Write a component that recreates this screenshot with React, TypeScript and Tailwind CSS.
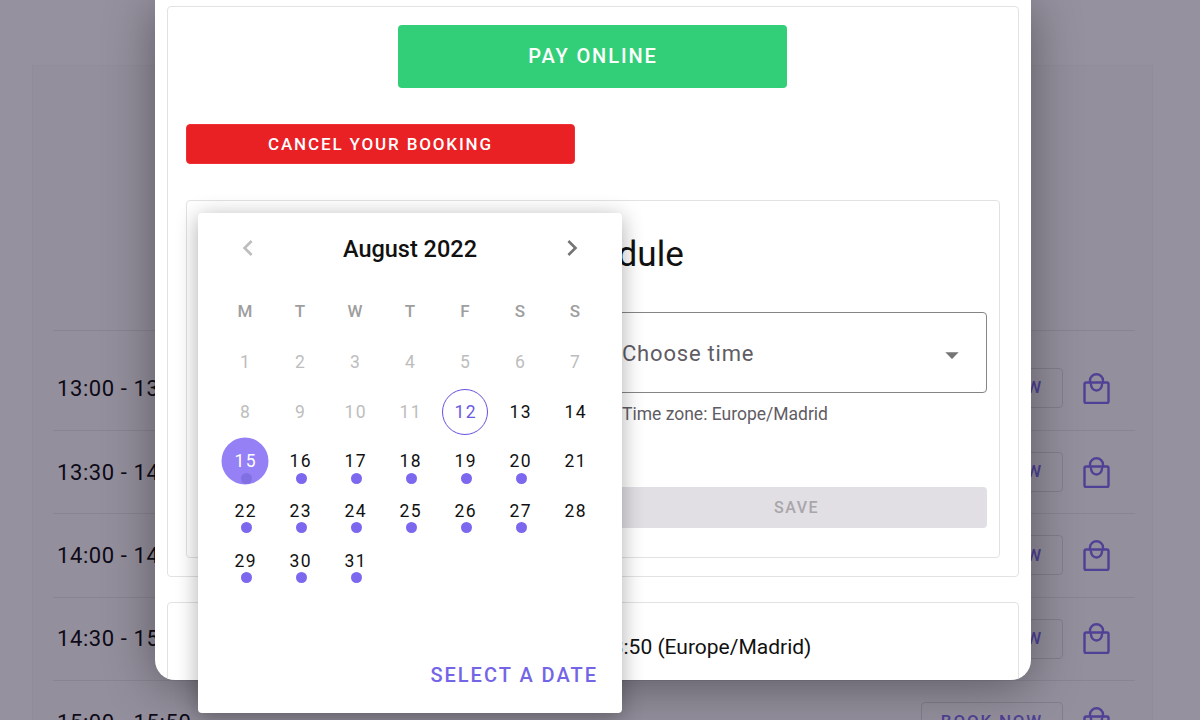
import React from 'react';

const font = { fontFamily: 'Roboto, sans-serif' };

const slots = ['13:00 - 13:50', '13:30 - 14:20', '14:00 - 14:50', '14:30 - 15:20', '15:00 - 15:50'];
const weekdays = ['M', 'T', 'W', 'T', 'F', 'S', 'S'];
const withDot = [15, 16, 17, 18, 19, 20, 22, 23, 24, 25, 26, 27, 29, 30, 31];

const BagIcon = () => (
  <svg width="27" height="31" viewBox="0 0 27 31" fill="none" stroke="#7b68ee" strokeWidth="2.4" strokeLinejoin="round" strokeLinecap="round">
    <path d="M3 9.5h21a1.5 1.5 0 0 1 1.5 1.5v17.5a1.5 1.5 0 0 1-1.5 1.5H3a1.5 1.5 0 0 1-1.5-1.5V11A1.5 1.5 0 0 1 3 9.5z" />
    <path d="M7 9.5V7.5a6.5 6.2 0 0 1 13 0v2" />
    <path d="M8 11.5a5.5 6 0 0 0 11 0" />
  </svg>
);

function SlotRow({ time, first }: { time: string; first?: boolean }) {
  return (
    <div className={`flex items-center justify-between border-t border-[#e6e6e6] pl-1 pr-[25px] ${first ? 'h-[100px] pt-[15px]' : 'h-[83.33px]'}`}>
      <span className="text-[22px] tracking-[0.6px] text-black">{time}</span>
      <div className="flex items-center gap-5">
        <button className="flex h-10 w-[142px] items-center justify-center rounded border border-[#dcdcdc] text-[17px] font-medium tracking-[1.8px] text-[#7b68ee]">
          BOOK NOW
        </button>
        <BagIcon />
      </div>
    </div>
  );
}

function Calendar() {
  const days = Array.from({ length: 31 }, (_, i) => i + 1);
  return (
    <div className="absolute left-[198px] top-[213px] flex h-[500px] w-[424px] flex-col rounded bg-white shadow-[0_4px_22px_rgba(0,0,0,0.32)]">
      <div className="flex h-[70px] items-center justify-between px-[34px]">
        <svg width="32" height="32" viewBox="0 0 24 24" fill="#bdbdbd"><path d="M15.41 7.41 14 6l-6 6 6 6 1.41-1.41L10.83 12z" /></svg>
        <span className="pt-[4px] text-[23.5px] font-medium text-[#111]">August 2022</span>
        <svg width="32" height="32" viewBox="0 0 24 24" fill="#757575"><path d="M8.59 16.59 10 18l6-6-6-6-1.41 1.41L13.17 12z" /></svg>
      </div>
      <div className="mx-auto mt-[4px] grid w-[385px] grid-cols-7">
        {weekdays.map((d, i) => (
          <div key={i} className="flex h-[50px] items-center justify-center text-[17px] font-medium text-[#9e9e9e]">{d}</div>
        ))}
      </div>
      <div className="mx-auto grid w-[385px] grid-cols-7">
        {days.map((d) => {
          const disabled = d < 12;
          return (
            <div key={d} className="relative flex h-[49.75px] items-center justify-center">
              {d === 12 && <span className="absolute left-1/2 top-1/2 h-[46px] w-[46px] -translate-x-1/2 -translate-y-1/2 rounded-full border border-[#6453e0]" />}
              {d === 15 && <span className="absolute left-1/2 top-1/2 h-[47px] w-[47px] -translate-x-1/2 -translate-y-1/2 rounded-full bg-[#9581f5]" />}
              <span className={`relative pl-[1.5px] text-[17.5px] tracking-[1.5px] ${disabled ? 'text-[#bdbdbd]' : d === 12 ? 'text-[#6a5ae0]' : d === 15 ? 'text-white' : 'text-[#111]'}`}>{d}</span>
              {withDot.includes(d) && (
                <span className={`absolute left-[23px] top-[36px] h-[11px] w-[11px] rounded-full ${d === 15 ? 'bg-[#8070e4]' : 'bg-[#7b68ee]'}`} />
              )}
            </div>
          );
        })}
      </div>
      <div className="mt-auto flex justify-end pb-[26px] pr-6">
        <span className="text-[20px] font-medium leading-6 tracking-[2px] text-[#7464e6]">SELECT A DATE</span>
      </div>
    </div>
  );
}

function Modal() {
  return (
    <div className="absolute left-[155px] top-0 h-[680px] w-[876px] overflow-hidden rounded-b-[20px] bg-white px-3 pt-[6px] shadow-[0_6px_50px_rgba(0,0,0,0.38)]">
      <div className="h-[571px] rounded border border-[#e2e2e2] px-[18px] pt-[18px]">
        <div className="flex justify-center pr-[2px]">
          <button className="flex h-[63px] w-[389px] items-center justify-center rounded bg-[#33cf78] pb-[2px] pl-[2px] text-[20px] font-medium tracking-[1.9px] text-white">
            PAY ONLINE
          </button>
        </div>
        <button className="mt-9 flex h-10 w-[389px] items-center justify-center rounded border border-[#f03035] bg-[#e92024] pt-[1px] text-[17px] font-medium tracking-[1.85px] text-white">
          CANCEL YOUR BOOKING
        </button>
        <div className="mt-9 h-[358px] rounded border border-[#e2e2e2] pl-[13px] pr-[12px]">
          <h2 className="pt-[34px] text-center text-[35px] font-normal leading-10 text-[#111]">Reschedule</h2>
          <div className="mt-[37px] flex gap-4">
            <div className="h-[81px] w-[390px] rounded border border-[#7d7d7d]" />
            <div className="flex flex-1 flex-col">
              <div className="flex h-[81px] items-center justify-between rounded border border-[#858585] pl-[15px] pr-[18px]">
                <span className="pt-[2px] text-[22px] tracking-[0.8px] text-[#5f5c64]">Choose time</span>
                <svg className="mt-1" width="32" height="32" viewBox="0 0 24 24" fill="#757575"><path d="M7 10l5 5 5-5z" /></svg>
              </div>
              <p className="mt-[11px] pl-4 text-[17.5px] leading-5 text-[#5f5c64]">Time zone: Europe/Madrid</p>
              <button className="mt-[63px] flex h-[41px] items-center justify-center rounded bg-[#e1dfe3] text-[16px] font-medium tracking-[1.5px] text-[#a8a6ac]">
                SAVE
              </button>
            </div>
          </div>
        </div>
      </div>
      <div className="mt-[25px] flex h-[120px] justify-center rounded border border-[#e2e2e2] pt-[30px]">
        <span className="text-[21px] leading-7 text-[#111]">15 August 2022, 13:00 - 13:50 (Europe/Madrid)</span>
      </div>
    </div>
  );
}

export default function App() {
  return (
    <div className="relative h-[720px] w-[1200px] overflow-hidden bg-white" style={font}>
      <div className="ml-[32px] mr-[47px] mt-[65px] h-[800px] border border-[#f6f6f6] bg-[#fcfcfc] pl-5 pr-[17px] pt-[264px]">
        {slots.map((t, i) => (
          <SlotRow key={t} time={t} first={i === 0} />
        ))}
      </div>
      <div className="absolute inset-0 bg-[#1d1630]/[0.47]" />
      <Modal />
      <Calendar />
    </div>
  );
}
